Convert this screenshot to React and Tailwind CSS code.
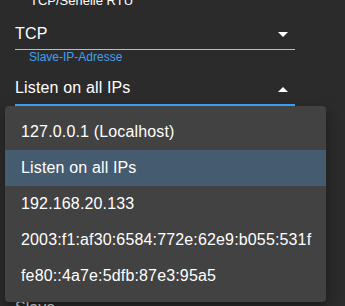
const OPTIONS = [
  '127.0.0.1 (Localhost)',
  'Listen on all IPs',
  '192.168.20.133',
  '2003:f1:af30:6584:772e:62e9:b055:531f',
  'fe80::4a7e:5dfb:87e3:95a5',
]

function Arrow({ up, className = '' }) {
  return (
    <svg width="10" height="5" viewBox="0 0 10 5" className={className}>
      <path d={up ? 'M0 5 L5 0 L10 5 Z' : 'M0 0 L10 0 L5 5 Z'} fill="#fff" />
    </svg>
  )
}

export default function App() {
  return (
    <div className="relative w-[345px] h-[306px] overflow-hidden bg-[#2b2b2b] text-white font-['Liberation_Sans',Arial,sans-serif]">
      <div className="pl-[15px] w-[295px]">
        <p className="-mt-[7px] ml-[15px] text-[13px] leading-[15px]">TCP/Serielle RTU</p>

        <div className="mt-[16px] pb-[5px] border-b border-[#bdbdbd] flex items-center justify-between">
          <span className="text-[16px] leading-[20px] tracking-[0.15px]">TCP</span>
          <Arrow className="mr-[7px]" />
        </div>

        <p className="ml-[14px] text-[12px] leading-[14px] text-[#42a0ee]">Slave-IP-Adresse</p>

        <div className="mt-[14px] pb-[6px] border-b-2 border-[#42a5f5] flex items-center justify-between">
          <span className="text-[16px] leading-[20px] tracking-[0.15px]">Listen on all IPs</span>
          <Arrow up className="mr-[7px] mt-[3px]" />
        </div>

        <p className="mt-[192px] text-[16px] leading-[20px] text-white/90">Slave</p>
      </div>

      <ul className="absolute left-[5px] top-[106px] w-[321px] py-[8px] rounded-[4px] bg-[#424242] shadow-[0_5px_5px_-3px_rgba(0,0,0,0.2),0_8px_10px_1px_rgba(0,0,0,0.14),0_3px_14px_2px_rgba(0,0,0,0.12)]">
        {OPTIONS.map((o, i) => (
          <li
            key={o}
            className={`h-[36px] px-[16px] flex items-center text-[16px] tracking-[0.15px] whitespace-nowrap ${i === 1 ? 'bg-[#455b6f]' : ''}`}
          >
            {o}
          </li>
        ))}
      </ul>
    </div>
  )
}
